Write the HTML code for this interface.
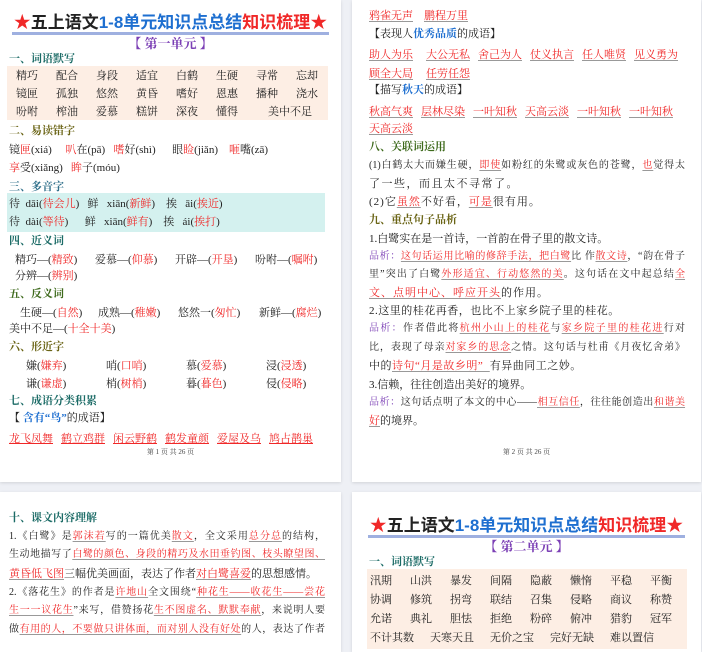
<!DOCTYPE html>
<html><head><meta charset="utf-8">
<style>
*{margin:0;padding:0;box-sizing:border-box}
body{width:702px;height:639px;background:#eef0f5;position:relative;overflow:hidden;font-family:"Liberation Serif","Noto Serif CJK SC",serif;color:#222}
.pg{position:absolute;background:#fff;box-shadow:0 1px 3px rgba(0,0,0,.12);overflow:hidden}
.l{position:absolute;white-space:nowrap;font-size:11px;line-height:14px}
.j{width:316px;text-align:justify;text-align-last:justify;white-space:normal;font-size:10px;height:14px}
.r{color:#f02828}
.u{color:#f02828;text-decoration:underline;text-decoration-color:#999;text-underline-offset:2px}
.b{color:#1e6fd0}
.h{font-weight:bold;font-size:11px}
.t1{color:#1b6b66}.t2{color:#6a6415}.t3{color:#2f6f8a}.t5{color:#3e6a1c}
.p{color:#7b3fb5}
.title{position:absolute;left:0;right:0;text-align:center;font-family:"Liberation Sans","Noto Sans CJK SC",sans-serif;font-size:17px;font-weight:bold;white-space:nowrap}
.title span.line{border-bottom:3px solid #9fb0e0;padding:0 2px}
.unit{position:absolute;left:0;right:0;text-align:center;color:#7b3fb5;font-size:13px;font-weight:bold}
.row{position:absolute;display:flex;font-size:11px;white-space:nowrap}
.row span{display:inline-block}
.ft{position:absolute;left:0;right:0;text-align:center;font-size:7px;color:#444}
</style></head><body>

<!-- PAGE 1 -->
<div class="pg" style="left:0;top:0;width:341px;height:482px">
<div class="title" style="top:8px"><span class="line"><span class="r">★</span>五上语文<span class="b">1-8单元知识点总结</span><span class="r">知识梳理</span><span class="r">★</span></span></div>
<div class="unit" style="top:33px">【 第一单元 】</div>
<div class="l h t1" style="left:9px;top:52px">一、词语默写</div>
<div style="position:absolute;left:7px;top:66px;width:321px;height:54px;background:#fdeee4"></div>
<div class="row" style="left:16px;top:67px"><span style="width:40px">精巧</span><span style="width:40px">配合</span><span style="width:40px">身段</span><span style="width:40px">适宜</span><span style="width:40px">白鹤</span><span style="width:40px">生硬</span><span style="width:40px">寻常</span><span>忘却</span></div>
<div class="row" style="left:16px;top:85px"><span style="width:40px">镜匣</span><span style="width:40px">孤独</span><span style="width:40px">悠然</span><span style="width:40px">黄昏</span><span style="width:40px">嗜好</span><span style="width:40px">恩惠</span><span style="width:40px">播种</span><span>浇水</span></div>
<div class="row" style="left:16px;top:103px"><span style="width:40px">吩咐</span><span style="width:40px">榨油</span><span style="width:40px">爱慕</span><span style="width:40px">糕饼</span><span style="width:40px">深夜</span><span style="width:52px">懂得</span><span>美中不足</span></div>
<div class="l h t2" style="left:9px;top:124px">二、易读错字</div>
<div class="l" style="left:9px;top:143px">镜<span class="r">匣</span>(xiá)&nbsp;&nbsp;&nbsp;&nbsp;&nbsp;<span class="r">叭</span>在(pā)&nbsp;&nbsp;&nbsp;<span class="r">嗜</span>好(shì)&nbsp;&nbsp;&nbsp;&nbsp;&nbsp;&nbsp;眼<span class="r">睑</span>(jiǎn)&nbsp;&nbsp;&nbsp;&nbsp;<span class="r">咂</span>嘴(zā)</div>
<div class="l" style="left:9px;top:161px"><span class="r">享</span>受(xiǎng)&nbsp;&nbsp;&nbsp;<span class="r">眸</span>子(móu)</div>
<div class="l h t3" style="left:9px;top:180px">三、多音字</div>
<div style="position:absolute;left:7px;top:193px;width:318px;height:39px;background:#d4f1ef"></div>
<div class="l" style="left:9px;top:197px">待&nbsp;&nbsp;dāi(<span class="r">待会儿</span>)&nbsp;&nbsp;&nbsp;鲜&nbsp;&nbsp;&nbsp;xiān(<span class="r">新鲜</span>)&nbsp;&nbsp;&nbsp;&nbsp;挨&nbsp;&nbsp;&nbsp;āi(<span class="r">挨近</span>)</div>
<div class="l" style="left:9px;top:215px">待&nbsp;&nbsp;dài(<span class="r">等待</span>)&nbsp;&nbsp;&nbsp;&nbsp;&nbsp;&nbsp;鲜&nbsp;&nbsp;&nbsp;xiān(<span class="r">鲜有</span>)&nbsp;&nbsp;&nbsp;&nbsp;挨&nbsp;&nbsp;&nbsp;ái(<span class="r">挨打</span>)</div>
<div class="l h t1" style="left:9px;top:234px">四、近义词</div>
<div class="row" style="left:15px;top:251px"><span style="width:80px">精巧—(<span class="r">精致</span>)</span><span style="width:80px">爱慕—(<span class="r">仰慕</span>)</span><span style="width:80px">开辟—(<span class="r">开垦</span>)</span><span>吩咐—(<span class="r">嘱咐</span>)</span></div>
<div class="l" style="left:15px;top:269px">分辨—(<span class="r">辨别</span>)</div>
<div class="l h t5" style="left:9px;top:287px">五、反义词</div>
<div class="row" style="left:20px;top:304px"><span style="width:78px">生硬—(<span class="r">自然</span>)</span><span style="width:80px">成熟—(<span class="r">稚嫩</span>)</span><span style="width:81px">悠然一(<span class="r">匆忙</span>)</span><span>新鲜—(<span class="r">腐烂</span>)</span></div>
<div class="l" style="left:9px;top:322px">美中不足—(<span class="r">十全十美</span>)</div>
<div class="l h t2" style="left:9px;top:340px">六、形近字</div>
<div class="row" style="left:26px;top:357px"><span style="width:80px">嫌(<span class="r">嫌弃</span>)</span><span style="width:80px">哨(<span class="r">口哨</span>)</span><span style="width:80px">慕(<span class="r">爱慕</span>)</span><span>浸(<span class="r">浸透</span>)</span></div>
<div class="row" style="left:26px;top:375px"><span style="width:80px">谦(<span class="r">谦虚</span>)</span><span style="width:80px">梢(<span class="r">树梢</span>)</span><span style="width:80px">暮(<span class="r">暮色</span>)</span><span>侵(<span class="r">侵略</span>)</span></div>
<div class="l h t1" style="left:9px;top:394px">七、成语分类积累</div>
<div class="l" style="left:9px;top:411px">【 <span class="b" style="font-weight:bold">含有“鸟”</span>的成语】</div>
<div class="row" style="left:9px;top:430px;color:#f02828"><span style="width:52px;text-decoration:underline">龙飞凤舞</span><span style="width:52px;text-decoration:underline">鹤立鸡群</span><span style="width:52px;text-decoration:underline">闲云野鹤</span><span style="width:52px;text-decoration:underline">鹤发童颜</span><span style="width:52px;text-decoration:underline">爱屋及乌</span><span style="text-decoration:underline">鸠占鹊巢</span></div>
<div class="ft" style="top:447px">第 1 页 共 26 页</div>
</div>

<!-- PAGE 2 -->
<div class="pg" style="left:352px;top:0;width:349px;height:482px">
<div class="l" style="left:17px;top:9px"><span class="u">鸦雀无声</span>&nbsp;&nbsp;&nbsp;&nbsp;<span class="u">鹏程万里</span></div>
<div class="l" style="left:17px;top:27px">【表现人<span class="b" style="font-weight:bold">优秀品质</span>的成语】</div>
<div class="row" style="left:17px;top:46px"><span style="width:57px" class="u">助人为乐</span><span style="width:52px" class="u">大公无私</span><span style="width:52px" class="u">舍己为人</span><span style="width:52px" class="u">仗义执言</span><span style="width:52px" class="u">任人唯贤</span><span class="u">见义勇为</span></div>
<div class="row" style="left:17px;top:65px"><span style="width:57px" class="u">顾全大局</span><span class="u">任劳任怨</span></div>
<div class="l" style="left:17px;top:83px">【描写<span class="b" style="font-weight:bold">秋天</span>的成语】</div>
<div class="row" style="left:17px;top:103px"><span style="width:52px" class="u">秋高气爽</span><span style="width:52px" class="u">层林尽染</span><span style="width:52px" class="u">一叶知秋</span><span style="width:52px" class="u">天高云淡</span><span style="width:52px" class="u">一叶知秋</span><span class="u">一叶知秋</span></div>
<div class="l" style="left:17px;top:122px"><span class="u">天高云淡</span></div>
<div class="l h t5" style="left:17px;top:140px">八、关联词运用</div>
<div class="l j" style="left:17px;top:159px">(1)白鹤太大而嫌生硬，<span class="u">即使</span>如粉红的朱鹭或灰色的苍鹭，<span class="u">也</span>觉得太</div>
<div class="l" style="left:17px;top:177px;letter-spacing:1.5px">了一些，而且太不寻常了。</div>
<div class="l" style="left:17px;top:195px;letter-spacing:1px">(2)它<span class="u">虽然</span>不好看，<span class="u">可是</span>很有用。</div>
<div class="l h t2" style="left:17px;top:213px">九、重点句子品析</div>
<div class="l" style="left:17px;top:232px">1.白鹭实在是一首诗，一首韵在骨子里的散文诗。</div>
<div class="l j" style="left:17px;top:250px"><span class="p">品析：</span><span class="u">这句话运用比喻的修辞手法，把白鹭</span>比 作<span class="u">散文诗</span>，“韵在骨子</div>
<div class="l j" style="left:17px;top:268px">里”突出了白鹭<span class="u">外形适宜、行动悠然的美</span>。这句话在文中起总结<span class="u">全</span></div>
<div class="l" style="left:17px;top:286px;letter-spacing:1px"><span class="u">文、点明中心、呼应开头</span>的作用。</div>
<div class="l" style="left:17px;top:304px;letter-spacing:.5px">2.这里的桂花再香，也比不上家乡院子里的桂花。</div>
<div class="l j" style="left:17px;top:322px"><span class="p">品析：</span>作者借此将<span class="u">杭州小山上的桂花</span>与<span class="u">家乡院子里的桂花进</span>行对</div>
<div class="l j" style="left:17px;top:341px">比，表现了母亲<span class="u">对家乡的思念</span>之情。这句话与杜甫《月夜忆舍弟》</div>
<div class="l" style="left:17px;top:359px;letter-spacing:.5px">中的<span class="u">诗句“月是故乡明”&nbsp;&nbsp;</span>有异曲同工之妙。</div>
<div class="l" style="left:17px;top:378px">3.信赖，往往创造出美好的境界。</div>
<div class="l j" style="left:17px;top:396px"><span class="p">品析：</span>这句话点明了本文的中心——<span class="u">相互信任</span>，往往能创造出<span class="u">和谐美</span></div>
<div class="l" style="left:17px;top:414px"><span class="u">好</span>的境界。</div>
<div class="ft" style="top:447px">第 2 页 共 26 页</div>
</div>

<!-- PAGE 3 -->
<div class="pg" style="left:0;top:492px;width:341px;height:160px">
<div class="l h t1" style="left:9px;top:19px">十、课文内容理解</div>
<div class="l j" style="left:9px;top:38px">1.《白鹭》是<span class="u">郭沫若</span>写的一篇优美<span class="u">散文</span>，全文采用<span class="u">总分总</span>的结构，</div>
<div class="l j" style="left:9px;top:56px">生动地描写了<span class="u">白鹭的颜色、身段的精巧及水田垂钓图、枝头瞭望图、</span></div>
<div class="l" style="left:9px;top:75px"><span class="u">黄昏低飞图</span>三幅优美画面，表达了作者<span class="u">对白鹭喜爱</span>的思想感情。</div>
<div class="l j" style="left:9px;top:94px">2.《落花生》的作者是<span class="u">许地山</span>全文围绕“<span class="u">种花生——收花生——尝花</span></div>
<div class="l j" style="left:9px;top:112px"><span class="u">生一一议花生</span>”来写，借赞扬花<span class="u">生不图虚名、默默奉献</span>，来说明人要</div>
<div class="l j" style="left:9px;top:131px">做<span class="u">有用的人，不要做只讲体面，而对别人没有好处</span>的人，表达了作者</div>
</div>

<!-- PAGE 4 -->
<div class="pg" style="left:352px;top:492px;width:349px;height:160px">
<div class="title" style="top:19px"><span class="line"><span class="r">★</span>五上语文<span class="b">1-8单元知识点总结</span><span class="r">知识梳理</span><span class="r">★</span></span></div>
<div class="unit" style="top:44px">【 第二单元 】</div>
<div class="l h t1" style="left:17px;top:63px">一、词语默写</div>
<div style="position:absolute;left:15px;top:77px;width:320px;height:80px;background:#fdeee4"></div>
<div class="row" style="left:18px;top:80px"><span style="width:40px">汛期</span><span style="width:40px">山洪</span><span style="width:40px">暴发</span><span style="width:40px">间隔</span><span style="width:40px">隐蔽</span><span style="width:40px">懒惰</span><span style="width:40px">平稳</span><span>平衡</span></div>
<div class="row" style="left:18px;top:99px"><span style="width:40px">协调</span><span style="width:40px">修筑</span><span style="width:40px">拐弯</span><span style="width:40px">联结</span><span style="width:40px">召集</span><span style="width:40px">侵略</span><span style="width:40px">商议</span><span>称赞</span></div>
<div class="row" style="left:18px;top:118px"><span style="width:40px">允诺</span><span style="width:40px">典礼</span><span style="width:40px">胆怯</span><span style="width:40px">拒绝</span><span style="width:40px">粉碎</span><span style="width:40px">俯冲</span><span style="width:40px">猎豹</span><span>冠军</span></div>
<div class="row" style="left:18px;top:137px"><span style="width:60px">不计其数</span><span style="width:60px">天寒天且</span><span style="width:60px">无价之宝</span><span style="width:60px">完好无缺</span><span>难以置信</span></div>
</div>
</body></html>
